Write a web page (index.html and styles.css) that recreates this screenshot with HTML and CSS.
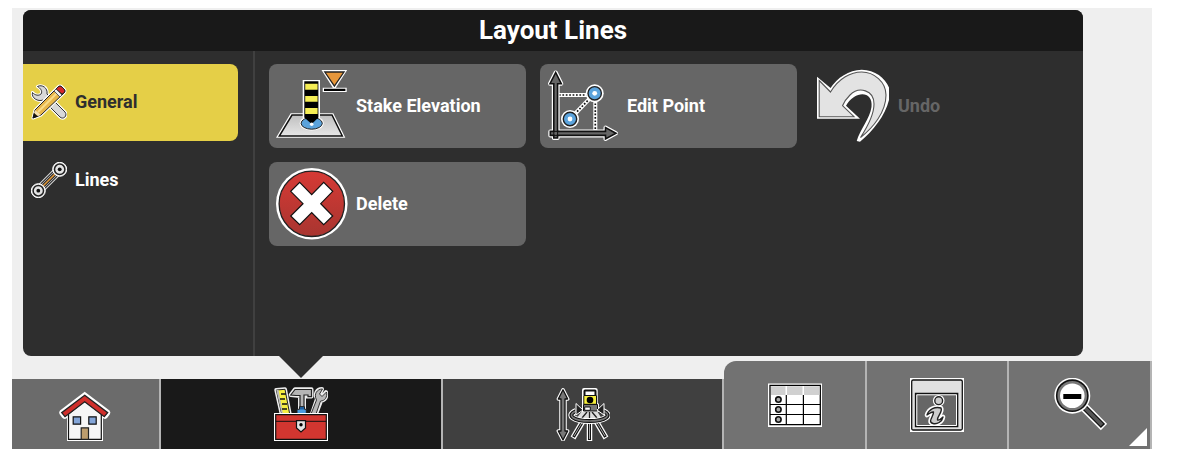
FILE: index.html
```
<!DOCTYPE html>
<html lang="en">
<head>
    <meta charset="UTF-8">
    <meta name="viewport" content="width=device-width, initial-scale=1.0">
    <title>Layout Lines</title>
    <link rel="stylesheet" href="styles.css">
</head>
<body>
    <div class="screen">
        <main class="panel">
            <h1>Layout Lines</h1>
            <div class="panel-body">
                <nav class="sidebar">
                    <a class="side-item active" href="#general">
                        <svg viewBox="0 0 36 36" aria-hidden="true">
                            <g stroke-linejoin="round">
                                <path d="M1.5 8.5 C4 11.5 8 12 10 10 C12 7 9 4 6.5 2.5 C11 0 17 4 16 10 L34 28 C37 32 32 36 29 33 L12 16 C7 18 0 14 1.5 8.5Z" fill="#ddd" stroke="#fff" stroke-width="3"/>
                                <path d="M1.5 8.5 C4 11.5 8 12 10 10 C12 7 9 4 6.5 2.5 C11 0 17 4 16 10 L34 28 C37 32 32 36 29 33 L12 16 C7 18 0 14 1.5 8.5Z" fill="#d8d8d8" stroke="#333" stroke-width="1"/>
                                <path d="M2 34 L4 26 L27 3 Q29 1 31 3 L33 5 Q35 7 33 9 L10 31Z" fill="#e8b64a" stroke="#fff" stroke-width="3"/>
                                <path d="M2 34 L4 26 L27 3 Q29 1 31 3 L33 5 Q35 7 33 9 L10 31Z" fill="#e8b64a" stroke="#222" stroke-width="1"/>
                                <path d="M7 28 L28 7" stroke="#f8dc8a" stroke-width="2"/>
                                <path d="M27 3 Q29 1 31 3 L33 5 Q35 7 33 9 L31 10 L25 5Z" fill="#d5262b" stroke="#222" stroke-width="1"/>
                                <path d="M25 5 L31 11 L29 13 L23 7Z" fill="#eee" stroke="#555" stroke-width="1"/>
                                <path d="M3 29 L4 26 L10 31 L7 32Z" fill="#f5dfae"/>
                                <path d="M1.5 34.5 L3 29 L7 32.5Z" fill="#111"/>
                            </g>
                        </svg>
                        <span>General</span>
                    </a>
                    <a class="side-item" href="#lines">
                        <svg viewBox="0 0 36 36" aria-hidden="true">
                            <path d="M8 28 L28 8" stroke="#ddd" stroke-width="9"/>
                            <path d="M8 28 L28 8" stroke="#222" stroke-width="7"/>
                            <path d="M8 28 L28 8" stroke="#ccc" stroke-width="5"/>
                            <path d="M8 28 L28 8" stroke="#222" stroke-width="3.6"/>
                            <path d="M11 25 L25 11" stroke="#e39a3c" stroke-width="1.6"/>
                            <g fill="#e4e4e4" stroke="#fff" stroke-width="1">
                                <circle cx="28.7" cy="7.3" r="7"/>
                                <circle cx="7.3" cy="28.7" r="7"/>
                            </g>
                            <g fill="#e4e4e4" stroke="#222" stroke-width="1.5">
                                <circle cx="28.7" cy="7.3" r="5.2"/>
                                <circle cx="7.3" cy="28.7" r="5.2"/>
                            </g>
                            <g fill="#111">
                                <circle cx="28.7" cy="7.3" r="1.9"/>
                                <circle cx="7.3" cy="28.7" r="1.9"/>
                            </g>
                        </svg>
                        <span>Lines</span>
                    </a>
                </nav>

                <section class="tools">
                    <button class="tool" type="button">
                        <svg viewBox="0 0 72 72" aria-hidden="true">
                            <defs>
                                <linearGradient id="plate" x1="0" y1="0" x2="0" y2="1">
                                    <stop offset="0" stop-color="#bfbfbf"/>
                                    <stop offset="1" stop-color="#e6e6e6"/>
                                </linearGradient>
                            </defs>
                            <path d="M14.7 43.3 H57.3 L69.3 67.7 H0Z" fill="#fff"/>
                            <path d="M16 45 H56 L66.3 66 H3.3Z" fill="url(#plate)" stroke="#111" stroke-width="1.5"/>
                            <ellipse cx="35.7" cy="53.3" rx="12" ry="7.3" fill="#fff"/>
                            <ellipse cx="35.7" cy="53.3" rx="10.6" ry="5.9" fill="#5ba3dc" stroke="#222" stroke-width="1"/>
                            <path d="M26.7 10 H44 V48 H26.7Z" fill="#fff"/>
                            <path d="M28.3 11.3 H42.4 V47.5 L35.7 54 L28.3 47.5Z" fill="#000"/>
                            <circle cx="35.7" cy="54.3" r="1.8" fill="#fff"/>
                            <path d="M29.2 13.7 H41.6 V19.8 H29.2Z M29.2 26 H41.6 V31.8 H29.2Z M29.2 38 H41.6 V44 H29.2Z" fill="#f6ee55"/>
                            <path d="M45.5 0 H71.2 L59.8 17.7 H70.7 V22 H46.7 V17.7 H56.8Z" fill="#fff"/>
                            <path d="M48.8 2 H68 L58.4 16Z" fill="#e6963a" stroke="#222" stroke-width="1.3"/>
                            <path d="M48 18.8 H69.4 V20.9 H48Z" fill="#000"/>
                        </svg>
                        <span>Stake Elevation</span>
                    </button>
                    <button class="tool" type="button">
                        <svg viewBox="0 0 72 72" aria-hidden="true">
                            <g stroke="#fff" stroke-width="4">
                                <path d="M12 25 H40"/>
                                <path d="M48.3 30 V60"/>
                                <path d="M23 49 L47.7 23.3"/>
                            </g>
                            <g stroke="#111" stroke-width="1.7" stroke-dasharray="1.7 1.7">
                                <path d="M12 25 H40"/>
                                <path d="M48.3 30 V60"/>
                                <path d="M23 49 L47.7 23.3"/>
                            </g>
                            <path d="M8.7 2.5 L14.3 13.7 H10.6 V61.4 H58.5 V57.5 L69 63.3 L58.5 69 V65.4 H10.6 V68 H6.8 V65.4 H3.3 V61.4 H6.8 V13.7 H3Z" fill="#666" stroke="#fff" stroke-width="4" stroke-linejoin="round"/>
                            <path d="M8.7 2.5 L14.3 13.7 H10.6 V61.4 H58.5 V57.5 L69 63.3 L58.5 69 V65.4 H10.6 V68 H6.8 V65.4 H3.3 V61.4 H6.8 V13.7 H3Z" fill="#666" stroke="#111" stroke-width="1.6"/>
                            <path d="M6.8 61.4 H10.6 V65.4 H6.8Z" fill="none" stroke="#111" stroke-width="1"/>
                            <g fill="#fff">
                                <circle cx="47.7" cy="23.3" r="9"/>
                                <circle cx="23" cy="49" r="9"/>
                            </g>
                            <g fill="#5ba3dc" stroke="#222" stroke-width="1.4">
                                <circle cx="47.7" cy="23.3" r="6.7"/>
                                <circle cx="23" cy="49" r="6.7"/>
                            </g>
                            <g fill="#fff">
                                <circle cx="47.7" cy="23.3" r="2.4"/>
                                <circle cx="23" cy="49" r="2.4"/>
                            </g>
                        </svg>
                        <span>Edit Point</span>
                    </button>
                    <button class="tool" type="button" disabled>
                        <svg viewBox="1 0 72 72" aria-hidden="true">
                            <path d="M0 6.7 L13.5 18 C20 8 32 -0.3 44.7 -0.3 C58 -0.3 68 8 72 17.5 V30 C68 46 56 61 43 71.7 L39.7 71 C43 60 53 48 54.5 37 C56 25 46 21 37 27 C33 29.5 31 32.5 29 35.7 L43 48.7 H0Z" fill="#fff"/>
                            <path d="M2.2 10.5 L13.5 22 C22 8 34 2 44.7 2 C57 2 69 12 69 25 C69 42 56 58 43.5 67.5 C51 56 57 45 57 34 C57 20 42 16 33 25 C29 29 27 32 25.5 35.7 L37 46.7 H2.2Z" fill="#e3e3e3" stroke="#555" stroke-width="1.1"/>
                        </svg>
                        <span>Undo</span>
                    </button>
                    <button class="tool" type="button">
                        <svg viewBox="0 0 72 72" aria-hidden="true">
                            <defs>
                                <linearGradient id="red" x1="0" y1="0" x2="0" y2="1">
                                    <stop offset="0" stop-color="#d63a35"/>
                                    <stop offset="1" stop-color="#a83530"/>
                                </linearGradient>
                            </defs>
                            <circle cx="35.8" cy="35.8" r="35.8" fill="#fff"/>
                            <circle cx="35.8" cy="35.8" r="32.7" fill="url(#red)" stroke="#222" stroke-width="1.3"/>
                            <path d="M23.7 14.3 L35.7 26.7 L47.7 14.3 L56.7 23.3 L44.7 35.7 L56.7 48 L47.7 56.7 L35.7 44.7 L23.7 56.7 L14.7 48 L27 35.7 L14.7 23.3Z" fill="#fff" stroke="#111" stroke-width="1.2"/>
                        </svg>
                        <span>Delete</span>
                    </button>
                </section>
            </div>
        </main>

        <footer class="toolbar">
            <button class="tab home" type="button" aria-label="Home">
                <svg viewBox="0 0 54 54" aria-hidden="true">
                    <path d="M26.7 4.7 L51.5 23.5 Q53 25 52 27 L49.5 30.5 Q47.500 33 45 31 V54 H9 V31 Q6 33 4 30.5 L1.5 27 Q0.5 25 2 23.5Z" fill="#fff"/>
                    <path d="M10.5 27 L26.7 14 L43.3 27 V52.4 H10.5Z" fill="#f6f6f6" stroke="#111" stroke-width="1.2"/>
                    <path d="M26.7 8.3 L49.7 25.7 L46.3 29.7 L26.7 14.7 L7 29.7 L3.7 25.7Z" fill="#d02f2b" stroke="#222" stroke-width="1.3"/>
                    <path d="M15.2 29.8 H22.6 V37.2 H15.2Z M30.8 29.8 H38.2 V37.2 H30.8Z" fill="#83a5d8" stroke="#111" stroke-width="1.2"/>
                    <path d="M23.2 40.8 H30.5 V52.4 H23.2Z" fill="#bd9d6d" stroke="#222" stroke-width="1.2"/>
                </svg>
            </button>
            <button class="tab toolbox" type="button" aria-label="Toolbox">
                <svg viewBox="0 0 54 54" aria-hidden="true">
                    <g stroke="#eee" stroke-width="4" stroke-linejoin="round">
                        <path d="M2.3 3 L11 2.3 L15.7 27 H7.7Z"/>
                        <path d="M16.7 8 L21 2.3 H37.5 V9.5 H30 V27 H26 V9Z"/>
                        <path d="M38 27 L43 12 C40 7 43 2 48 2 L46 7 L49 9 L52 5 C53 10 51 13 47 14 L42 27Z"/>
                    </g>
                    <path d="M2.3 3 L11 2.3 L15.7 27 H7.7Z" fill="#f6ee40" stroke="#222" stroke-width="1"/>
                    <path d="M2.3 3 L4.5 3 L9 27 H7.7Z" fill="#bbb"/>
                    <path d="M7 7 H12 M6 12 H11 M8 17 H13 M8 22 H13" stroke="#111" stroke-width="1.5"/>
                    <path d="M16.7 8 L21 2.5 H37.5 V9.7 H34 V8 H30 V20 H26 V8.5 H22Z" fill="#b5b5b5" stroke="#222" stroke-width="1.2"/>
                    <path d="M25.5 19.7 H30.5 V22.3 H32.3 V28 H23 V22.3 H25.5Z" fill="#4b9be0" stroke="#222" stroke-width="1"/>
                    <path d="M26 20 H30 V22.5 H26Z" fill="#1d5d9c"/>
                    <path d="M37 27 L42.5 13 C39.5 7 43 2 48.5 2 L45.5 7 L48 9.5 L52.5 5 C53.5 10 51 14 46.5 14 L42 27Z" fill="#b8b8b8" stroke="#333" stroke-width="1"/>
                    <path d="M0 26 H54 V54 H0Z" fill="#fff"/>
                    <path d="M1.7 27.7 H52.3 V52.3 H1.7Z" fill="#d23630" stroke="#111" stroke-width="1.2"/>
                    <path d="M1.7 34.3 H52.3" stroke="#111" stroke-width="1"/>
                    <path d="M22.5 33.7 H31.5 V41 L27 45 L22.5 41Z" fill="#e4e4e4" stroke="#111" stroke-width="1.2"/>
                    <circle cx="27" cy="37.7" r="1.7" fill="#000"/>
                </svg>
            </button>
            <button class="tab height" type="button" aria-label="Instrument height">
                <svg viewBox="0 0 54 54" aria-hidden="true">
                    <g stroke-linejoin="round">
                        <path d="M7 2.8 L11.7 12 H9 V44 H11.7 L7 53 L2.3 44 H5 V12 H2.3Z" fill="#777" stroke="#fff" stroke-width="3.5"/>
                        <path d="M7 2.8 L11.7 12 H9 V44 H11.7 L7 53 L2.3 44 H5 V12 H2.3Z" fill="#777" stroke="#111" stroke-width="1.3"/>
                    </g>
                    <g stroke="#fff" stroke-width="5.5">
                        <path d="M27 34 L17 51"/>
                        <path d="M33.5 33 V54"/>
                        <path d="M40 34 L50 51"/>
                    </g>
                    <g stroke="#111" stroke-width="3">
                        <path d="M27 34 L17.5 50"/>
                        <path d="M33.5 33 V53"/>
                        <path d="M40 34 L49.5 50"/>
                    </g>
                    <g stroke="#aaa" stroke-width="1">
                        <path d="M27 34 L18 49"/>
                        <path d="M33.5 33 V52"/>
                        <path d="M40 34 L49 49"/>
                    </g>
                    <path d="M26 24 L41 24 L46 32 H20Z" fill="#ddd"/>
                    <path d="M31 25 L26 31 M33.5 25 V31 M36 25 L41 31" stroke="#222" stroke-width="1.3"/>
                    <path d="M20 24 C10 28 17 34 33.5 34 C50 34 57 28 47 24" fill="none" stroke="#fff" stroke-width="6"/>
                    <path d="M20 24 C10 28 17 34 33.5 34 C50 34 57 28 47 24" fill="none" stroke="#111" stroke-width="4"/>
                    <path d="M20 24 C10 28 17 34 33.5 34 C50 34 57 28 47 24" fill="none" stroke="#777" stroke-width="1.6"/>
                    <path d="M26 3 Q26 1 28 1 H39.5 Q41.7 1 41.7 3 V16 L43 17 V25 H26Z" fill="#fff"/>
                    <path d="M27.5 8 V4 Q27.5 2.5 29 2.5 H39 Q40.5 2.5 40.5 4 V8Z" fill="#111"/>
                    <path d="M29.5 4.5 H38.5 V8 H29.5Z" fill="#fff"/>
                    <path d="M27.8 8.5 H40.5 V17.3 H27.8Z" fill="#f5ee3c" stroke="#111" stroke-width="1"/>
                    <circle cx="34" cy="13" r="3.3" fill="#000"/>
                    <path d="M27.5 17.5 H41.5 V24 H27.5Z" fill="#777" stroke="#111" stroke-width="1"/>
                    <path d="M28.7 20 H34.3 V23.3 H28.7Z" fill="#fff" stroke="#111" stroke-width="1"/>
                    <path d="M20 16.5 L27 23 L20 28Z M48 16.5 L41 23 L48 28Z" fill="#222" stroke="#fff" stroke-width="1"/>
                </svg>
            </button>
            <div class="tab-group">
                <button class="tab" type="button" aria-label="Point list">
                    <svg viewBox="0 0 54 54" aria-hidden="true">
                        <path d="M0 5.5 H54 V49 H0Z" fill="#fff"/>
                        <path d="M2 7.3 H52.3 V46.7 H2Z" fill="#fff" stroke="#000" stroke-width="1.3"/>
                        <path d="M3 8.3 H17.5 V17 H3Z M19 8.3 H34.5 V17 H19Z M36 8.3 H51.5 V17 H36Z" fill="#d0d0d0"/>
                        <path d="M2 26.5 H52.3 M2 36.5 H52.3 M18.3 17 V46.7 M35.4 17 V46.7" stroke="#000" stroke-width="1.2"/>
                        <g fill="#aaa" stroke="#111" stroke-width="1.6">
                            <circle cx="10.4" cy="21.6" r="2.7"/>
                            <circle cx="10.4" cy="31.5" r="2.7"/>
                            <circle cx="10.4" cy="41.5" r="2.7"/>
                        </g>
                    </svg>
                </button>
                <button class="tab" type="button" aria-label="Information">
                    <svg viewBox="0 0 54 54" aria-hidden="true">
                        <path d="M0 0 H54 V54 H0Z" fill="#fff"/>
                        <rect x="1.7" y="2" width="50.6" height="50" rx="1.5" fill="#e0e0e0" stroke="#111" stroke-width="1.3"/>
                        <path d="M5.5 15.5 H47.7 V48.7 H5.5Z" fill="#666" stroke="#111" stroke-width="1.3"/>
                        <path d="M6.8 16.8 H46.5 V47.5 H6.8Z" fill="none" stroke="#fff" stroke-width="1"/>
                        <g stroke-linejoin="round" stroke-linecap="round">
                            <circle cx="28.7" cy="22.7" r="5.8" fill="#fff"/>
                            <path d="M17 37 C19 31 25 28.500 31 30 C33 34 27 38 27.500 42 C29 42.500 31 41 33 39 C32 44 27 46.500 23 45.500 C17 44 24 38 23.500 34 C21 33.500 19.500 35.500 17 37Z" fill="#fff" stroke="#fff" stroke-width="4.6"/>
                            <path d="M17 37 C19 31 25 28.500 31 30 C33 34 27 38 27.500 42 C29 42.500 31 41 33 39 C32 44 27 46.500 23 45.500 C17 44 24 38 23.500 34 C21 33.500 19.500 35.500 17 37Z" fill="#ccc" stroke="#222" stroke-width="1.4"/>
                            <circle cx="28.7" cy="22.7" r="3.9" fill="#ccc" stroke="#222" stroke-width="1.4"/>
                        </g>
                    </svg>
                </button>
                <button class="tab more" type="button" aria-label="Zoom out">
                    <svg viewBox="0 0 54 54" aria-hidden="true">
                        <path d="M29 27 L51 49" stroke="#fff" stroke-width="9"/>
                        <path d="M29 27 L50 48" stroke="#111" stroke-width="6"/>
                        <path d="M29 27 L49 47" stroke="#555" stroke-width="3.5"/>
                        <circle cx="19.3" cy="17.7" r="18" fill="#fff"/>
                        <circle cx="19.3" cy="17.7" r="16.4" fill="#111"/>
                        <circle cx="19.3" cy="17.7" r="14.8" fill="#777"/>
                        <circle cx="19.3" cy="17.7" r="12.3" fill="#fff"/>
                        <path d="M10.3 16 H28.3 V21 H10.3Z" fill="#000"/>
                    </svg>
                </button>
            </div>
        </footer>
    </div>
</body>
</html>
```
FILE: styles.css
```
* {
    box-sizing: border-box;
}
body {
    margin: 0;
    background-color: #fff;
    font-family: Roboto, sans-serif;
}
.screen {
    margin: 8px 45px 0 12px;
    padding-top: 2px;
    background-color: #efefef;
}
.panel {
    margin: 0 69px 0 11px;
    border-radius: 8px;
    overflow: hidden;
    background-color: #2e2e2e;
}
h1 {
    margin: 0;
    background-color: #191919;
    color: #fff;
    font-size: 26px;
    font-weight: 700;
    line-height: 41px;
    text-align: center;
}
.panel-body {
    display: flex;
    min-height: 305px;
}
.sidebar {
    width: 232px;
    padding: 13px 15px 0 0;
    border-right: 2px solid #404040;
}
.side-item {
    display: flex;
    align-items: center;
    gap: 8px;
    height: 77px;
    margin-bottom: 1px;
    padding: 0 0 2px 8px;
    border-radius: 0 8px 8px 0;
    color: #fff;
    font-size: 18px;
    font-weight: 700;
    text-decoration: none;
}
.side-item svg {
    width: 36px;
    height: 36px;
}
.side-item.active {
    background-color: #e5cf47;
    color: #2e2e2e;
}
.tools {
    flex: 1;
    display: grid;
    grid-template-columns: repeat(3, 1fr);
    grid-auto-rows: 84px;
    gap: 14px;
    padding: 13px 15px 14px 14px;
}
.tool {
    display: flex;
    align-items: center;
    gap: 8px;
    padding: 0 7px;
    border: none;
    border-radius: 8px;
    background-color: #666;
    color: #fff;
    font-family: inherit;
    font-size: 18px;
    font-weight: 700;
    cursor: pointer;
}
.tool svg {
    flex: none;
    width: 72px;
    height: 72px;
    overflow: visible;
}
.tool span {
    padding-bottom: 2px;
}
.tool:disabled {
    background: none;
    color: #666;
    cursor: default;
}
.toolbar {
    display: flex;
    align-items: flex-end;
    margin-top: 5px;
}
.tab {
    position: relative;
    display: flex;
    align-items: center;
    justify-content: center;
    height: 70px;
    padding: 0;
    border: none;
    border-right: 2px solid #b4b4b4;
    background-color: #727272;
    cursor: pointer;
}
.tab svg {
    width: 54px;
    height: 54px;
}
.home {
    flex: 147;
    background-color: #6b6b6b;
}
.toolbox {
    flex: 280;
    background-color: #191919;
}
/* pointer from the open panel down to its tab */
.toolbox::before {
    content: "";
    position: absolute;
    top: -23px;
    left: 50%;
    margin-left: -22px;
    border: 22px solid transparent;
    border-top-color: #2e2e2e;
    border-bottom: none;
}
.height {
    flex: 280;
    background-color: #404040;
}
.tab-group {
    flex: 428;
    display: flex;
    border-radius: 12px 0 0 0;
    overflow: hidden;
}
.tab-group .tab {
    flex: 1;
    height: 88px;
}
.more::after {
    content: "";
    position: absolute;
    right: 3px;
    bottom: 3px;
    border-left: 18px solid transparent;
    border-bottom: 18px solid #fff;
}
```
